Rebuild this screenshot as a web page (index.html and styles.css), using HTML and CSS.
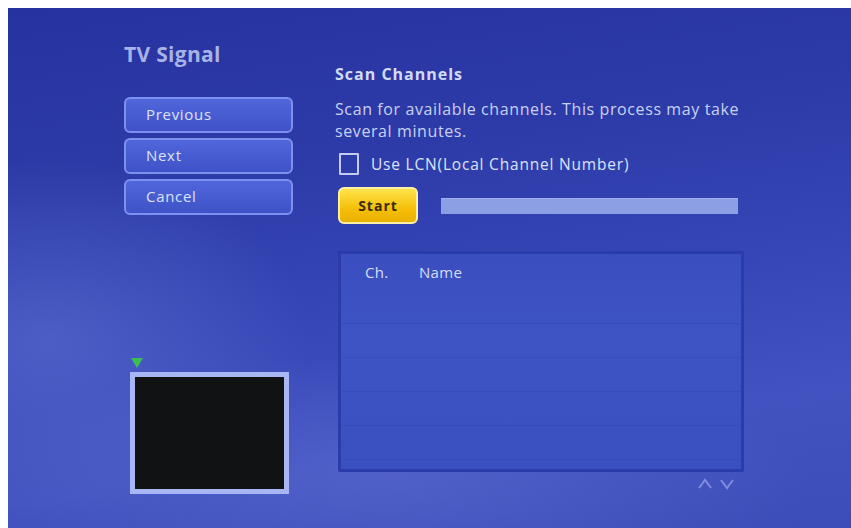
FILE: index.html
```html
<!DOCTYPE html>
<html lang="en">
<head>
    <meta charset="UTF-8">
    <meta name="viewport" content="width=device-width, initial-scale=1.0">
    <title>TV Signal - Scan Channels</title>
    <link rel="stylesheet" href="styles.css">
</head>
<body>
    <div class="screen">
        <div class="side">
            <h1 class="title">TV Signal</h1>
            <div class="nav">
                <button class="nav-btn">Previous</button>
                <button class="nav-btn">Next</button>
                <button class="nav-btn">Cancel</button>
            </div>
            <div class="preview-wrap">
                <div class="signal-mark"></div>
                <div class="preview"></div>
            </div>
        </div>

        <div class="main">
            <h2 class="heading">Scan Channels</h2>
            <p class="desc">Scan for available channels. This process may take several minutes.</p>
            <label class="check-row">
                <span class="checkbox"></span>
                Use LCN(Local Channel Number)
            </label>
            <div class="start-row">
                <button class="start-btn">Start</button>
                <div class="progress"></div>
            </div>

            <div class="list">
                <div class="list-head">
                    <span class="col-ch">Ch.</span>
                    <span class="col-name">Name</span>
                </div>
                <div class="row"></div>
                <div class="row"></div>
                <div class="row"></div>
                <div class="row"></div>
                <div class="row"></div>
            </div>
            <div class="scroll">
                <svg width="16" height="14" viewBox="0 0 16 14"><path d="M2 11 L8 3 L14 11" fill="none" stroke="#9aa7ea" stroke-width="2"/></svg>
                <svg width="16" height="14" viewBox="0 0 16 14"><path d="M2 3 L8 11 L14 3" fill="none" stroke="#9aa7ea" stroke-width="2"/></svg>
            </div>
        </div>
    </div>
</body>
</html>
```

FILE: styles.css
```css
html, body {
    height: 100%;
}

body {
    margin: 8px 0 0 8px;
    background: #ffffff;
    overflow: hidden;
    font-family: "Open Sans", "Noto Sans", sans-serif;
}

.screen {
    height: calc(100vh - 8px);
    box-sizing: border-box;
    display: flex;
    gap: 42px;
    padding: 33px 0 0 116px;
    color: #c9d1f4;
    background:
        radial-gradient(ellipse 260px 180px at 40px 330px, rgba(120, 140, 230, 0.35), rgba(120, 140, 230, 0) 100%),
        radial-gradient(ellipse 420px 120px at 380px 470px, rgba(110, 125, 220, 0.35), rgba(110, 125, 220, 0) 100%),
        linear-gradient(172deg, #26329f 0%, #2d3ba8 30%, #3646b6 55%, #4252c0 78%, #3c4cb8 100%);
}

/* left column */
.side {
    width: 169px;
    display: flex;
    flex-direction: column;
}

.title {
    margin: 0;
    font-size: 21px;
    line-height: 26px;
    font-weight: 700;
    letter-spacing: 0.3px;
    color: #a7b3e6;
}

.nav {
    margin-top: 30px;
    display: flex;
    flex-direction: column;
    gap: 5px;
}

.nav-btn {
    height: 36px;
    padding: 0 0 2px 20px;
    text-align: left;
    font-family: inherit;
    font-size: 15px;
    letter-spacing: 0.7px;
    color: #dce2ff;
    background: linear-gradient(#5166da, #3f52c8);
    border: 2px solid #7d90ee;
    border-radius: 6px;
}

.preview-wrap {
    margin-top: 143px;
}

.signal-mark {
    width: 0;
    height: 0;
    margin-left: 7px;
    border-left: 6px solid transparent;
    border-right: 6px solid transparent;
    border-top: 10px solid #3cbf52;
}

.preview {
    width: 149px;
    height: 112px;
    margin: 4px 0 0 6px;
    background: #111214;
    border: 5px solid #a8b7f4;
}

/* right column */
.main {
    width: 412px;
    display: flex;
    flex-direction: column;
}

.heading {
    margin: 23px 0 0;
    font-size: 16px;
    line-height: 20px;
    font-weight: 700;
    letter-spacing: 1px;
    color: #d4dbf8;
}

.desc {
    margin: 14px 0 0;
    width: 410px;
    font-size: 16px;
    line-height: 22px;
    letter-spacing: 0.6px;
}

.check-row {
    margin: 11px 0 0 4px;
    display: flex;
    align-items: center;
    gap: 12px;
    font-size: 15.5px;
    line-height: 22px;
    letter-spacing: 0.8px;
    color: #dde3fb;
}

.checkbox {
    width: 16px;
    height: 18px;
    border: 2px solid #c3cbf1;
    border-radius: 1px;
}

.start-row {
    margin: 12px 0 0 3px;
    display: flex;
    align-items: center;
    gap: 23px;
}

.start-btn {
    width: 80px;
    height: 37px;
    font-family: inherit;
    font-size: 14px;
    font-weight: 700;
    letter-spacing: 1px;
    color: #3b2c00;
    background: linear-gradient(#ffe34a, #f5bf08 60%, #eab000);
    border: 2px solid #fff0a6;
    border-radius: 6px;
}

.progress {
    width: 297px;
    height: 15px;
    background: #8c9fe4;
    border-top: 1px solid #9fb0ec;
}

.list {
    margin: 27px 0 0 3px;
    width: 406px;
    height: 221px;
    box-sizing: border-box;
    background: linear-gradient(#3a4ebf, #3e53c4 40%, #3b50c0);
    border: 3px solid #2b3ba9;
    border-radius: 2px;
}

.list-head {
    height: 36px;
    display: flex;
    align-items: center;
    font-size: 15px;
    letter-spacing: 0.3px;
    color: #d6ddfa;
}

.col-ch {
    margin-left: 24px;
    width: 54px;
}

.row {
    height: 33px;
    border-bottom: 1px solid rgba(40, 55, 170, 0.25);
}

.scroll {
    margin: 5px 0 0 362px;
    display: flex;
    gap: 6px;
    opacity: 0.7;
}
```
